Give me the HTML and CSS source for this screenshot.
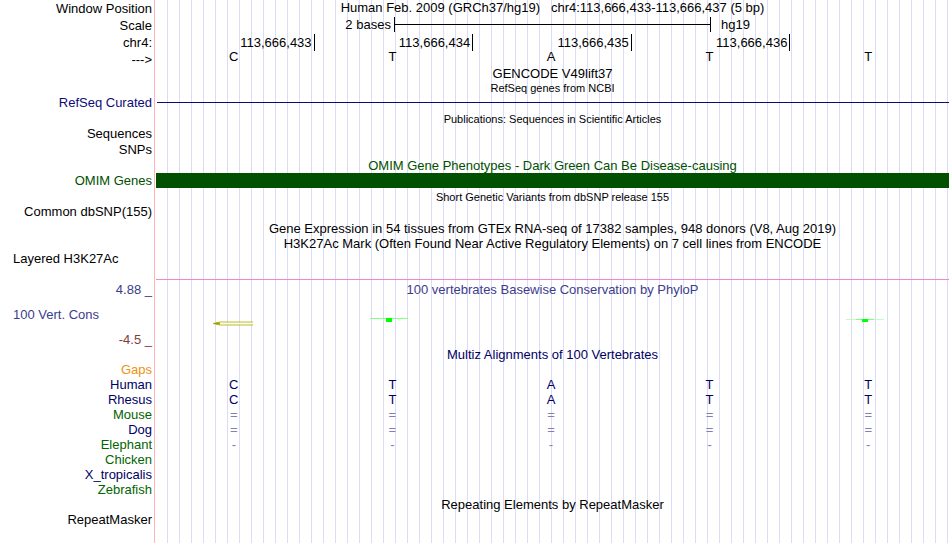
FILE: index.html
```
<!DOCTYPE html>
<html lang="en">
    <head>
        <meta charset="utf-8">
        <title>chr4:113,666,433-113,666,437</title>
        <meta name="viewport" content="width=device-width, initial-scale=1">
        <link rel="stylesheet" href="styles.css">
    </head>
    <body>
        <main class="browser">
            <!-- Ruler -->
            <section class="track ruler">
                <div class="row">
                    <div class="label">Window Position</div>
                    <div class="title">Human Feb. 2009 (GRCh37/hg19) &nbsp; chr4:113,666,433-113,666,437 (5 bp)</div>
                </div>
                <div class="row">
                    <div class="label">Scale</div>
                    <div class="scale"><span class="scale-size">2 bases</span><span class="scale-bar"></span><span class="scale-db">hg19</span></div>
                </div>
                <div class="row">
                    <div class="label">chr4:</div>
                    <div class="cells ticks"><span>113,666,433</span><span>113,666,434</span><span>113,666,435</span><span>113,666,436</span></div>
                </div>
                <div class="row">
                    <div class="label">---&gt;</div>
                    <div class="cells bases"><span>C</span><span>T</span><span>A</span><span>T</span><span>T</span></div>
                </div>
            </section>

            <section class="track">
                <div class="row"><h2 class="title">GENCODE V49lift37</h2></div>
            </section>

            <section class="track">
                <div class="row small"><h2 class="title">RefSeq genes from NCBI</h2></div>
                <div class="row refseq">
                    <div class="label">RefSeq Curated</div>
                    <div class="intron"></div>
                </div>
            </section>

            <section class="track spaced">
                <div class="row small"><h2 class="title">Publications: Sequences in Scientific Articles</h2></div>
                <div class="row"><div class="label">Sequences</div></div>
                <div class="row spaced"><div class="label">SNPs</div></div>
            </section>

            <section class="track omim spaced">
                <div class="row small"><h2 class="title">OMIM Gene Phenotypes - Dark Green Can Be Disease-causing</h2></div>
                <div class="row">
                    <div class="label">OMIM Genes</div>
                    <div class="block"></div>
                </div>
            </section>

            <section class="track spaced">
                <div class="row small"><h2 class="title">Short Genetic Variants from dbSNP release 155</h2></div>
                <div class="row"><div class="label">Common dbSNP(155)</div></div>
            </section>

            <section class="track spaced">
                <div class="row"><h2 class="title">Gene Expression in 54 tissues from GTEx RNA-seq of 17382 samples, 948 donors (V8, Aug 2019)</h2></div>
            </section>

            <section class="track">
                <div class="row"><h2 class="title">H3K27Ac Mark (Often Found Near Active Regulatory Elements) on 7 cell lines from ENCODE</h2></div>
                <div class="row signal">
                    <div class="label wiggle">Layered H3K27Ac</div>
                    <div class="baseline"></div>
                </div>
            </section>

            <!-- PhyloP -->
            <section class="track spaced">
                <div class="row phylop">
                    <div class="label limits">
                        <span>4.88 _</span>
                        <span class="wiggle">100 Vert. Cons</span>
                        <span class="min">-4.5 _</span>
                    </div>
                    <div class="plot">
                        <h2 class="title">100 vertebrates Basewise Conservation by PhyloP</h2>
                        <div class="cells logos">
                            <span>
                                <svg width="44" height="8" viewBox="0 0 44 8">
                                    <path d="M1 5.5L8 4H41M1 5.5L8 7H41" fill="none" stroke="#bcbc30"/>
                                    <path d="M1 5.5L5 4.5H8V6.5H5Z" fill="#a0a000"/>
                                    <path d="M9 5.5H40" stroke="#fcfcdc"/>
                                </svg>
                            </span>
                            <span>
                                <svg width="44" height="8" viewBox="0 0 44 8" shape-rendering="crispEdges">
                                    <rect y="0" width="38" height="1" fill="#80ff80"/>
                                    <rect x="16" y="0" width="6" height="4" fill="#00ff00"/>
                                </svg>
                            </span>
                            <span></span>
                            <span></span>
                            <span>
                                <svg width="44" height="8" viewBox="0 0 44 8" shape-rendering="crispEdges">
                                    <rect y="1" width="38" height="1" fill="#c0ffc0"/>
                                    <rect x="10" y="1" width="18" height="1" fill="#80ff80"/>
                                    <rect x="16" y="1" width="6" height="3" fill="#00ff00"/>
                                </svg>
                            </span>
                        </div>
                    </div>
                </div>
            </section>

            <!-- Multiz -->
            <section class="track multiz">
                <div class="row"><h2 class="title">Multiz Alignments of 100 Vertebrates</h2></div>
                <div class="row gaps"><div class="label">Gaps</div></div>
                <div class="row">
                    <div class="label">Human</div>
                    <div class="cells"><span>C</span><span>T</span><span>A</span><span>T</span><span>T</span></div>
                </div>
                <div class="row">
                    <div class="label">Rhesus</div>
                    <div class="cells"><span>C</span><span>T</span><span>A</span><span>T</span><span>T</span></div>
                </div>
                <div class="row alt">
                    <div class="label">Mouse</div>
                    <div class="cells unaligned"><span>=</span><span>=</span><span>=</span><span>=</span><span>=</span></div>
                </div>
                <div class="row">
                    <div class="label">Dog</div>
                    <div class="cells unaligned"><span>=</span><span>=</span><span>=</span><span>=</span><span>=</span></div>
                </div>
                <div class="row alt">
                    <div class="label">Elephant</div>
                    <div class="cells unaligned"><span>-</span><span>-</span><span>-</span><span>-</span><span>-</span></div>
                </div>
                <div class="row alt"><div class="label">Chicken</div></div>
                <div class="row"><div class="label">X_tropicalis</div></div>
                <div class="row alt"><div class="label">Zebrafish</div></div>
            </section>

            <section class="track">
                <div class="row"><h2 class="title">Repeating Elements by RepeatMasker</h2></div>
                <div class="row"><div class="label">RepeatMasker</div></div>
            </section>
        </main>
    </body>
</html>
```
FILE: styles.css
```
body {
    background: #fff;
    color: #000;
    font-family: "Liberation Sans", Arial, sans-serif;
    font-size: 13px;
    line-height: 15px;
    margin: 0;
}

/* label column, pink divider and vertical guidelines */
.browser {
    background:
        linear-gradient(#ffb4b4, #ffb4b4) 154px 0 / 1px 100% no-repeat,
        repeating-linear-gradient(to right, transparent 0 11px, #dcdcf8 11px 12px) 156px 0 no-repeat;
    box-sizing: border-box;
    min-height: 100vh;
    padding-right: 1px;
}

.row {
    display: grid;
    grid-template-columns: 152px 1fr;
    column-gap: 4px;
    min-height: 15px;
}

.small {
    min-height: 14px;
    font-size: 11px;
    line-height: 14px;
}

.spaced {
    padding-top: 2px;
}

.row.spaced {
    padding-top: 1px;
}

.label {
    grid-column: 1;
    text-align: right;
    white-space: nowrap;
}

.title {
    font-size: inherit;
    font-weight: normal;
    grid-column: 2;
    margin: 0;
    text-align: center;
    white-space: nowrap;
}

.wiggle {
    padding-left: 13px;
    text-align: left;
}

/* one cell per base */
.cells {
    display: grid;
    grid-template-columns: repeat(5, 1fr);
    text-align: center;
}

.cells span {
    padding-right: 3px;
}

/* Ruler */
.ruler .row {
    height: 17px;
}

.ruler .row:last-child {
    height: 15px;
}

.ruler .label {
    line-height: 17px;
}

.ruler .bases {
    line-height: 12px;
}

.ticks {
    height: 15px;
    text-align: right;
}

.ticks span {
    border-right: 1px solid #000;
    line-height: 17px;
    padding-right: 2px;
}

.scale {
    display: grid;
    grid-template-columns: 3fr 4fr 3fr;
    height: 15px;
}

.scale-size {
    padding-right: 3px;
    text-align: right;
}

.scale-bar {
    background: linear-gradient(#000, #000) 0 7px / 100% 1px no-repeat;
    border-left: 1px solid #000;
    border-right: 1px solid #000;
}

.scale-db {
    padding-left: 10px;
}

/* Gene tracks */
.refseq {
    color: #0c0c78;
}

.intron {
    background: linear-gradient(#0c0c78, #0c0c78) 1px 7px / 100% 1px no-repeat;
}

.omim {
    color: #005000;
}

.omim .title {
    font-size: 13px;
}

.block {
    background: #005000;
}

/* Signal tracks */
.signal {
    height: 29px;
}

.baseline {
    border-bottom: 1px solid #f884cc;
}

.phylop {
    color: #3c3c8c;
    height: 65px;
}

.limits {
    display: flex;
    flex-direction: column;
    justify-content: space-between;
}

.min {
    color: #823c3c;
}

.logos {
    padding-top: 21px;
}

.logos svg {
    display: block;
    margin: 0 auto;
}

/* Alignments */
.multiz {
    color: #000064;
}

.alt .label {
    color: #006400;
}

.gaps {
    color: #f0910f;
}

.unaligned {
    color: #8080b2;
}
```
